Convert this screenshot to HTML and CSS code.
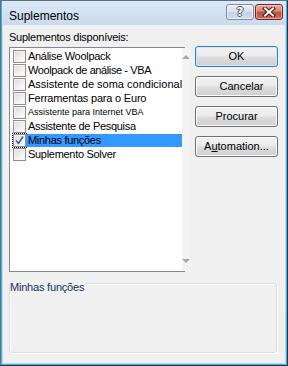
FILE: index.html
```html
<!DOCTYPE html>
<html lang="pt">
<head>
<meta charset="utf-8">
<title>Suplementos</title>
<link rel="stylesheet" href="styles.css">
</head>
<body>
<div class="window">
  <div class="titlebar">
    <span class="title">Suplementos</span>
    <div class="caption-buttons">
      <div class="cap-btn help"><span class="q">?</span></div>
      <div class="cap-btn close">
        <svg width="14" height="10" viewBox="0 0 14 10"><path d="M3 1.5 L11 8.5 M11 1.5 L3 8.5" stroke="#3a1a14" stroke-width="4" stroke-linecap="square"/><path d="M3 1.5 L11 8.5 M11 1.5 L3 8.5" stroke="#ffffff" stroke-width="2" stroke-linecap="square"/></svg>
      </div>
    </div>
  </div>
  <div class="client">
    <div class="caption-label">Suplementos disponíveis:</div>
    <div class="main">
      <div class="listbox">
        <ul class="items">
          <li class="item"><span class="check"></span><span class="text f1">Análise Woolpack</span></li>
          <li class="item"><span class="check"></span><span class="text f1b">Woolpack de análise - VBA</span></li>
          <li class="item"><span class="check"></span><span class="text f2">Assistente de soma condicional</span></li>
          <li class="item"><span class="check"></span><span class="text f3">Ferramentas para o Euro</span></li>
          <li class="item"><span class="check"></span><span class="text f4">Assistente para Internet VBA</span></li>
          <li class="item"><span class="check"></span><span class="text f1">Assistente de Pesquisa</span></li>
          <li class="item selected"><span class="focus"><span class="check checked"><svg width="11" height="11" viewBox="0 0 11 11"><path d="M2 5.5 L4.5 8.5 L9 1.5" fill="none" stroke="#4a5f97" stroke-width="1.6"/></svg></span></span><span class="text f1">Minhas funções</span></li>
          <li class="item"><span class="check"></span><span class="text f1">Suplemento Solver</span></li>
        </ul>
        <div class="scrollbar">
          <span class="arrow up"></span>
          <span class="arrow down"></span>
        </div>
      </div>
      <div class="buttons">
        <div class="btn default">OK</div>
        <div class="btn shift">Cancelar</div>
        <div class="btn">Procurar</div>
        <div class="btn"><span>A<u>u</u>tomation...</span></div>
      </div>
    </div>
    <div class="group">
      <span class="group-label">Minhas funções</span>
    </div>
  </div>
</div>
</body>
</html>
```
FILE: styles.css
```css
html, body {
  margin: 0;
  padding: 0;
  width: 288px;
  height: 366px;
  overflow: hidden;
  background: #ffffff;
}

.window {
  box-sizing: border-box;
  width: 288px;
  height: 366px;
  border: 1px solid #5f6f82;
  border-bottom-color: #1f3550;
  border-right-color: #1f3550;
  background: linear-gradient(#dde8f5 0px, #c9d9ec 25px, #c4d5ea 100%);
  display: flex;
  flex-direction: column;
  padding: 0 1px 1px 1px;
  box-shadow: inset 1px 0 0 #39b7e8, inset -1px 0 0 #39b7e8, inset 0 -1px 0 #39b7e8;
}

.titlebar {
  height: 24px;
  display: flex;
  align-items: flex-start;
  justify-content: space-between;
  flex: none;
}

.title {
  font-family: "Liberation Sans", Arial, sans-serif;
  font-size: 12px;
  color: #000;
  padding: 8px 0 0 7px;
  line-height: 14px;
}

.caption-buttons {
  display: flex;
  gap: 1px;
  padding-top: 3px;
  padding-right: 3px;
}

.cap-btn {
  box-sizing: border-box;
  width: 28px;
  height: 16px;
  border-radius: 3px;
  display: flex;
  align-items: center;
  justify-content: center;
}

.help {
  border: 1px solid #7b8ca3;
  background: linear-gradient(#e8eff8 0%, #d5e0ee 50%, #c3d2e5 51%, #cfdcec 100%);
  box-shadow: inset 0 0 0 1px rgba(255,255,255,0.6);
}

.q {
  font-family: "DejaVu Sans", sans-serif;
  font-weight: bold;
  font-size: 12px;
  line-height: 12px;
  color: #fff;
  text-shadow: 1px 0 0 #4a5566, -1px 0 0 #4a5566, 0 1px 0 #4a5566, 0 -1px 0 #4a5566;
}

.close {
  border: 1px solid #6e2a22;
  background: linear-gradient(#e8a799 0%, #d98674 45%, #c44a35 50%, #d1705b 100%);
  box-shadow: inset 0 0 0 1px rgba(255,220,210,0.5);
}

.client {
  flex: 1;
  background: #f0f0f0;
  margin: 0 1px 1px 1px;
  padding: 0 6px 0 6px;
  display: flex;
  flex-direction: column;
  font-family: "Liberation Sans", Arial, sans-serif;
  font-size: 11px;
  color: #000;
}

.caption-label {
  padding-top: 6px;
  line-height: 13px;
  height: 16px;
  letter-spacing: -0.25px;
}

.main {
  display: flex;
  gap: 10px;
}

.listbox {
  box-sizing: border-box;
  width: 176px;
  height: 225px;
  border: 1px solid #828790;
  background: #fff;
  display: flex;
}

.items {
  list-style: none;
  margin: 0;
  padding: 1px 0 0 0;
  flex: 1;
}

.item {
  height: 14px;
  display: flex;
  align-items: center;
  padding-left: 3px;
}

.check {
  box-sizing: border-box;
  width: 13px;
  height: 13px;
  border: 1px solid #8f8f8f;
  background: linear-gradient(135deg, #d9d9d9 0%, #f2f2f2 60%, #ffffff 100%);
  box-shadow: inset 0 0 0 1px #f4f4f4;
  flex: none;
  display: flex;
  align-items: center;
  justify-content: center;
}

.focus {
  display: flex;
  outline: 1px dotted #000;
  outline-offset: 0px;
}

.text {
  flex: 1;
  margin-left: 0;
  padding-left: 2px;
  line-height: 13px;
  white-space: nowrap;
}

.selected .text {
  background: #3399ff;
}

.f1 { font-size: 11px; letter-spacing: -0.3px; }
.f1b { font-size: 11px; letter-spacing: -0.4px; }
.f2 { font-size: 11px; }
.f3 { font-size: 11px; letter-spacing: -0.2px; }
.f4 { font-size: 9px; letter-spacing: 0px; }

.scrollbar {
  width: 17px;
  background: #f3f3f3;
  display: flex;
  flex-direction: column;
  justify-content: space-between;
  align-items: center;
  padding: 7px 0 8px 0;
}

.arrow {
  width: 0;
  height: 0;
  border-left: 4px solid transparent;
  border-right: 4px solid transparent;
}

.up { border-bottom: 4px solid #a6a6a6; }
.down { border-top: 4px solid #a6a6a6; }

.buttons {
  display: flex;
  flex-direction: column;
  gap: 9px;
  margin-top: -1px;
}

.btn {
  box-sizing: border-box;
  width: 83px;
  height: 21px;
  border: 1px solid #707070;
  border-radius: 3px;
  background: linear-gradient(#f2f2f2 0%, #ebebeb 48%, #dddddd 52%, #cfcfcf 100%);
  box-shadow: inset 0 0 0 1px #fbfbfb;
  display: flex;
  align-items: center;
  justify-content: center;
  line-height: 13px;
}

.btn.default {
  border-color: #3c7fb1;
  box-shadow: inset 0 0 0 1px #c5ecfc;
}

.btn.shift { padding-left: 10px; }

.group {
  position: relative;
  box-sizing: border-box;
  margin-top: 11px;
  height: 70px;
  width: 268px;
  border: 1px solid #d5dfe5;
  border-radius: 3px;
  box-shadow: inset 1px 1px 0 #fff, 1px 1px 0 #fff;
}

.group-label {
  position: absolute;
  left: 0;
  top: -3px;
  background: #f0f0f0;
  line-height: 12px;
  color: #1c2f5a;
  padding-right: 1px;
  letter-spacing: -0.2px;
}
```
